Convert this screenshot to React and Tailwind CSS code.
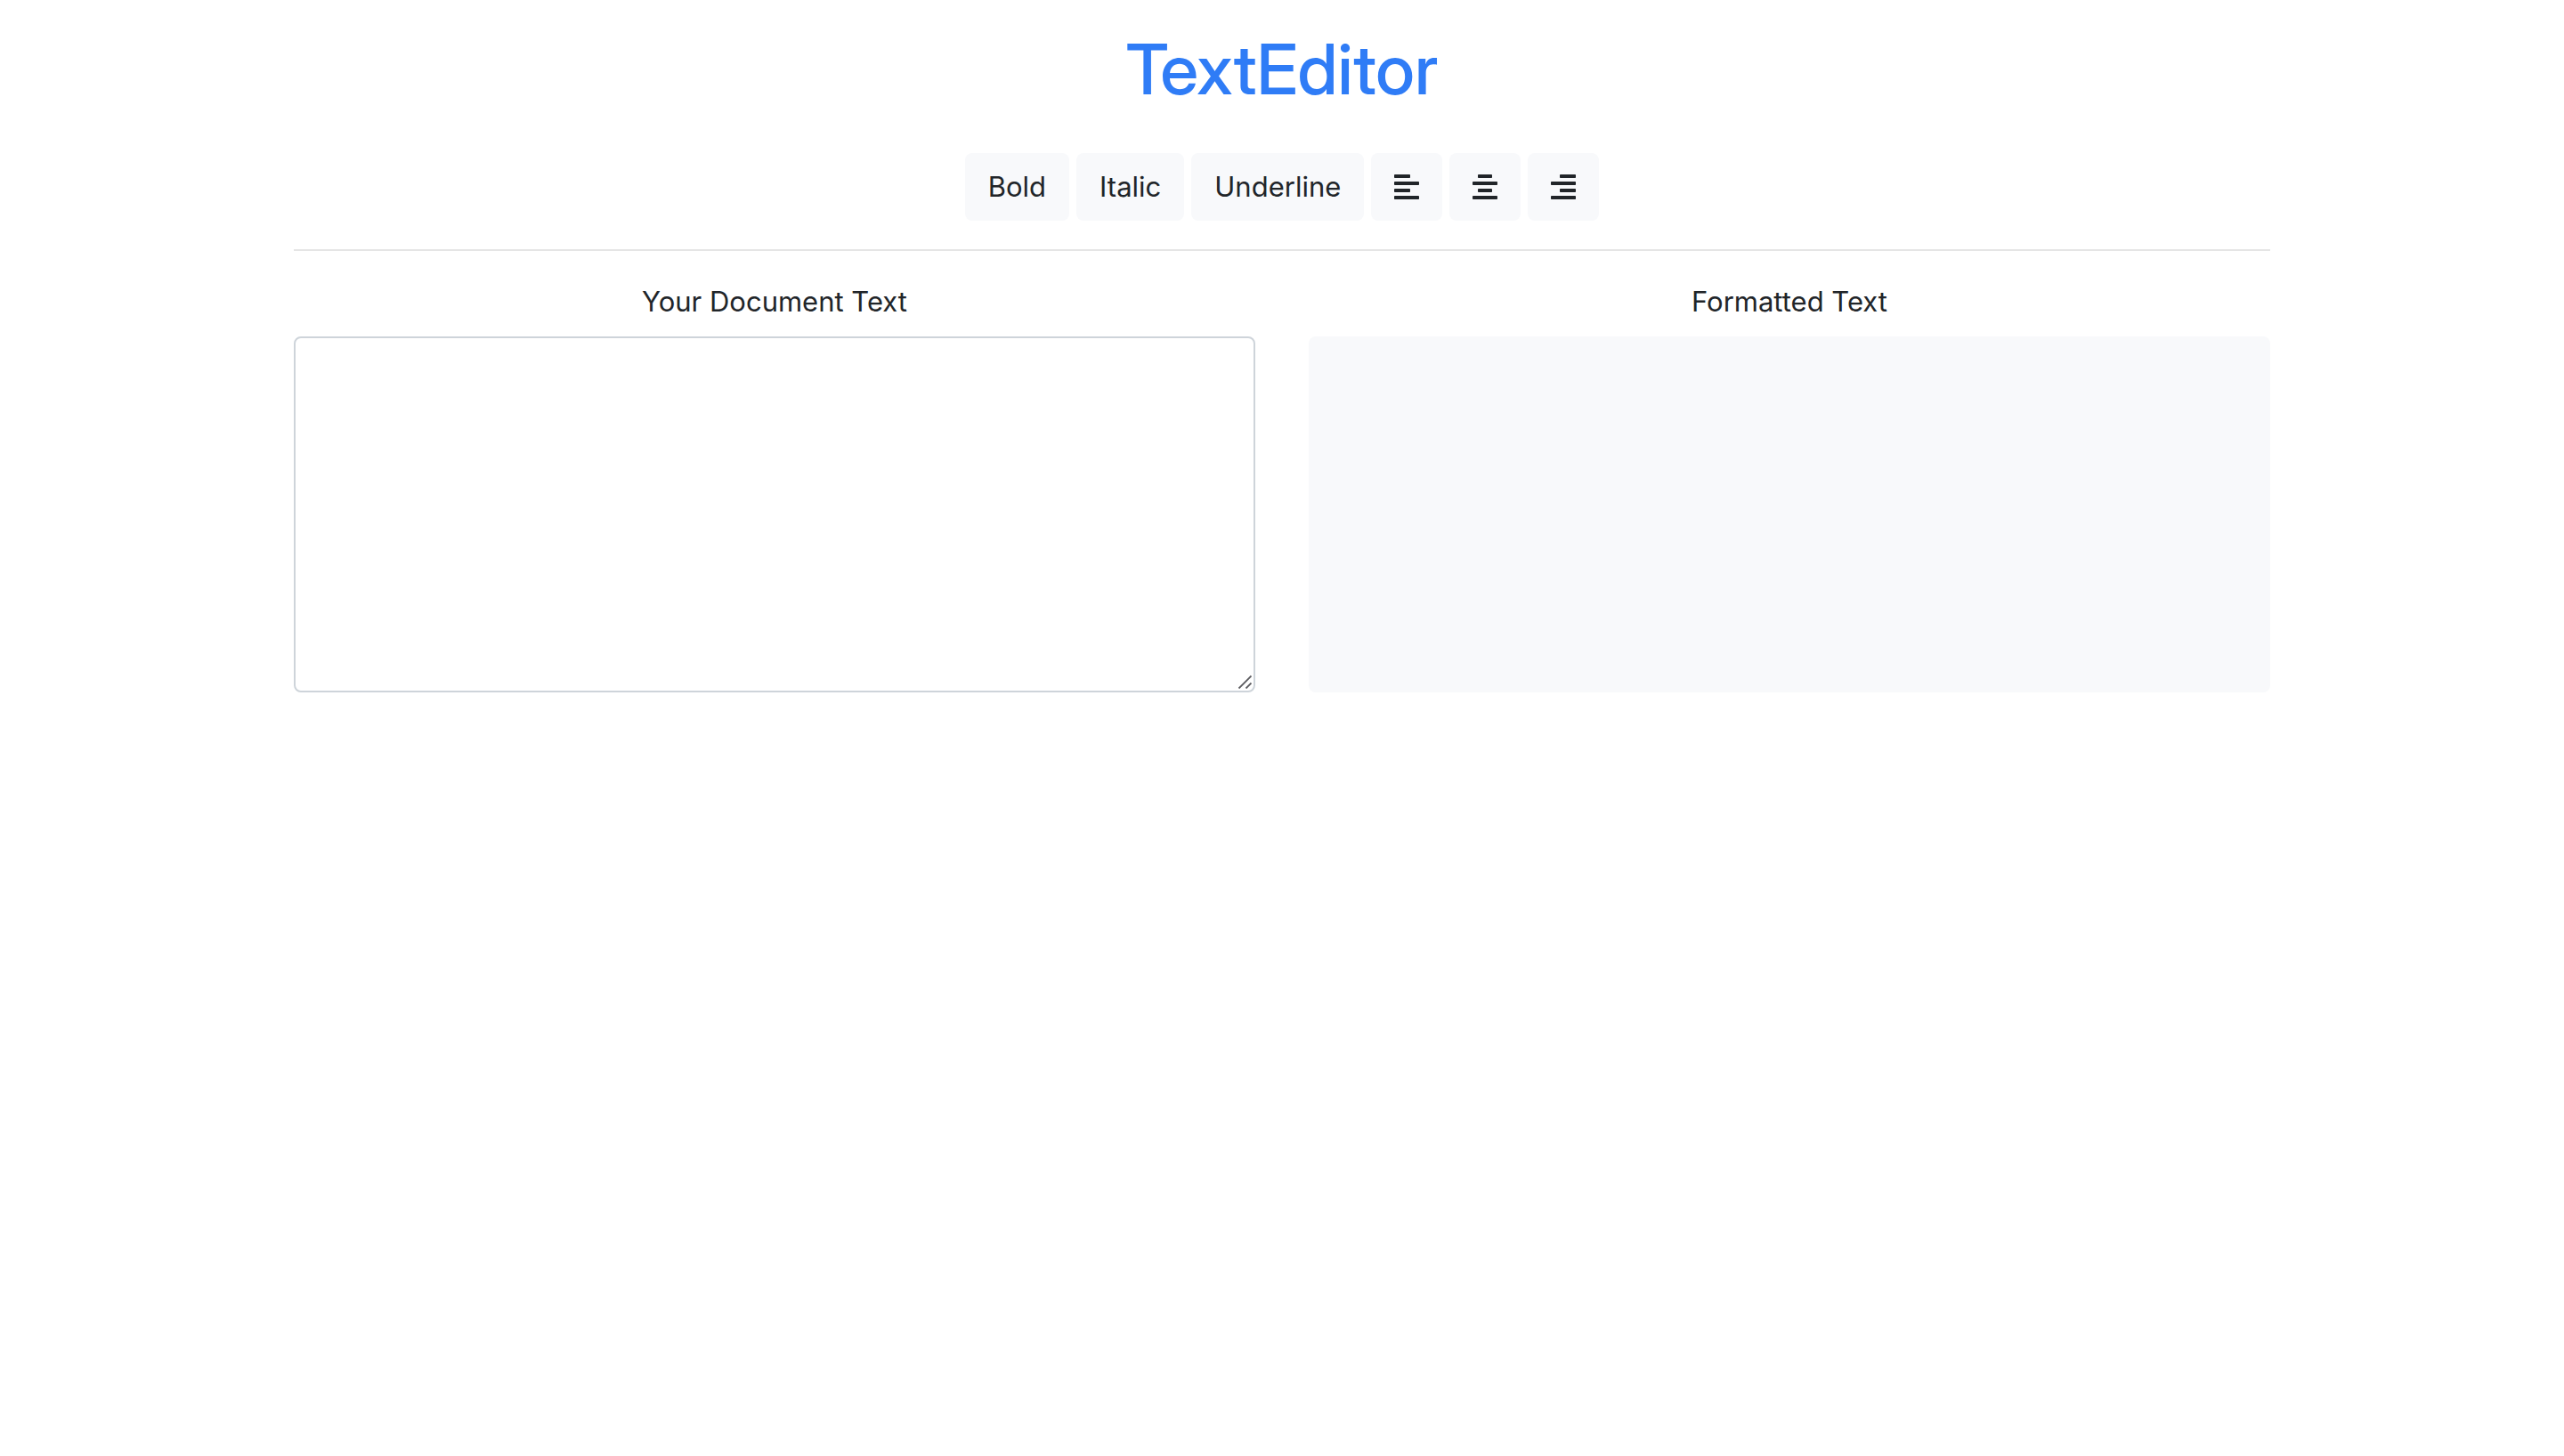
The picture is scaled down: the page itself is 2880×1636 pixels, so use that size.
import { useState } from "react";

const buttonClass =
  "flex h-[76px] items-center justify-center rounded-lg bg-[#f8f9fb] px-[26px] text-[#212529] cursor-pointer";

const labelClass = "mb-3.5 text-center leading-[50px]";

const icons = {
  left: [[0, 18], [0, 28], [0, 18], [0, 28]],
  center: [[6, 16], [0, 28], [6, 16], [0, 28]],
  right: [[10, 18], [0, 28], [10, 18], [0, 28]],
};

function AlignIcon({ side }) {
  return (
    <svg width="28" height="28" viewBox="0 0 28 28" fill="currentColor" aria-hidden="true">
      {icons[side].map(([x, width], row) => (
        <rect key={row} x={x} y={row * 8} width={width} height="4" rx="0.8" />
      ))}
    </svg>
  );
}

export default function App() {
  const [text, setText] = useState("");
  const [bold, setBold] = useState(false);
  const [italic, setItalic] = useState(false);
  const [underline, setUnderline] = useState(false);
  const [align, setAlign] = useState("left");

  return (
    <main className="mx-auto w-full max-w-[2280px] px-[30px] pt-8 text-[31px] leading-[48px] text-[#212529] font-['Inter',sans-serif]">
      <h1 className="text-center text-[78px] leading-[92px] font-medium text-[#2f7cf6] font-['Inter_Display','Inter',sans-serif]">
        TextEditor
      </h1>

      <div className="mt-12 flex justify-center gap-2">
        <button type="button" className={buttonClass} onClick={() => setBold(!bold)}>Bold</button>
        <button type="button" className={buttonClass} onClick={() => setItalic(!italic)}>Italic</button>
        <button type="button" className={buttonClass} onClick={() => setUnderline(!underline)}>Underline</button>
        {["left", "center", "right"].map((side) => (
          <button
            key={side}
            type="button"
            aria-label={`Align ${side}`}
            className={buttonClass}
            onClick={() => setAlign(side)}
          >
            <AlignIcon side={side} />
          </button>
        ))}
      </div>

      <hr className="mt-8 border-t-2 border-[#e5e5e5]" />

      <div className="mt-8 grid grid-cols-2 gap-[60px]">
        <div className="flex flex-col">
          <label htmlFor="document" className={labelClass}>Your Document Text</label>
          <div className="relative flex">
            <textarea
              id="document"
              value={text}
              onChange={(event) => setText(event.target.value)}
              className="h-[400px] w-full resize-none rounded-lg border-2 border-[#ced4da] bg-white px-6 py-3 outline-none"
            />
            <svg
              className="pointer-events-none absolute right-1 bottom-1"
              width="16"
              height="16"
              viewBox="0 0 16 16"
              fill="none"
              stroke="#5c5c60"
              strokeWidth="1.8"
              aria-hidden="true"
            >
              <path d="M1.5 15.5 15.5 1.5M9.5 15.5l6-6" />
            </svg>
          </div>
        </div>
        <div className="flex flex-col">
          <h2 id="formatted" className={labelClass}>Formatted Text</h2>
          <div
            role="region"
            aria-labelledby="formatted"
            className="h-[400px] overflow-auto rounded-lg bg-[#f8f9fb] px-6 py-3 whitespace-pre-wrap"
            style={{
              fontWeight: bold ? 700 : 400,
              fontStyle: italic ? "italic" : "normal",
              textDecoration: underline ? "underline" : "none",
              textAlign: align,
            }}
          >
            {text}
          </div>
        </div>
      </div>
    </main>
  );
}
